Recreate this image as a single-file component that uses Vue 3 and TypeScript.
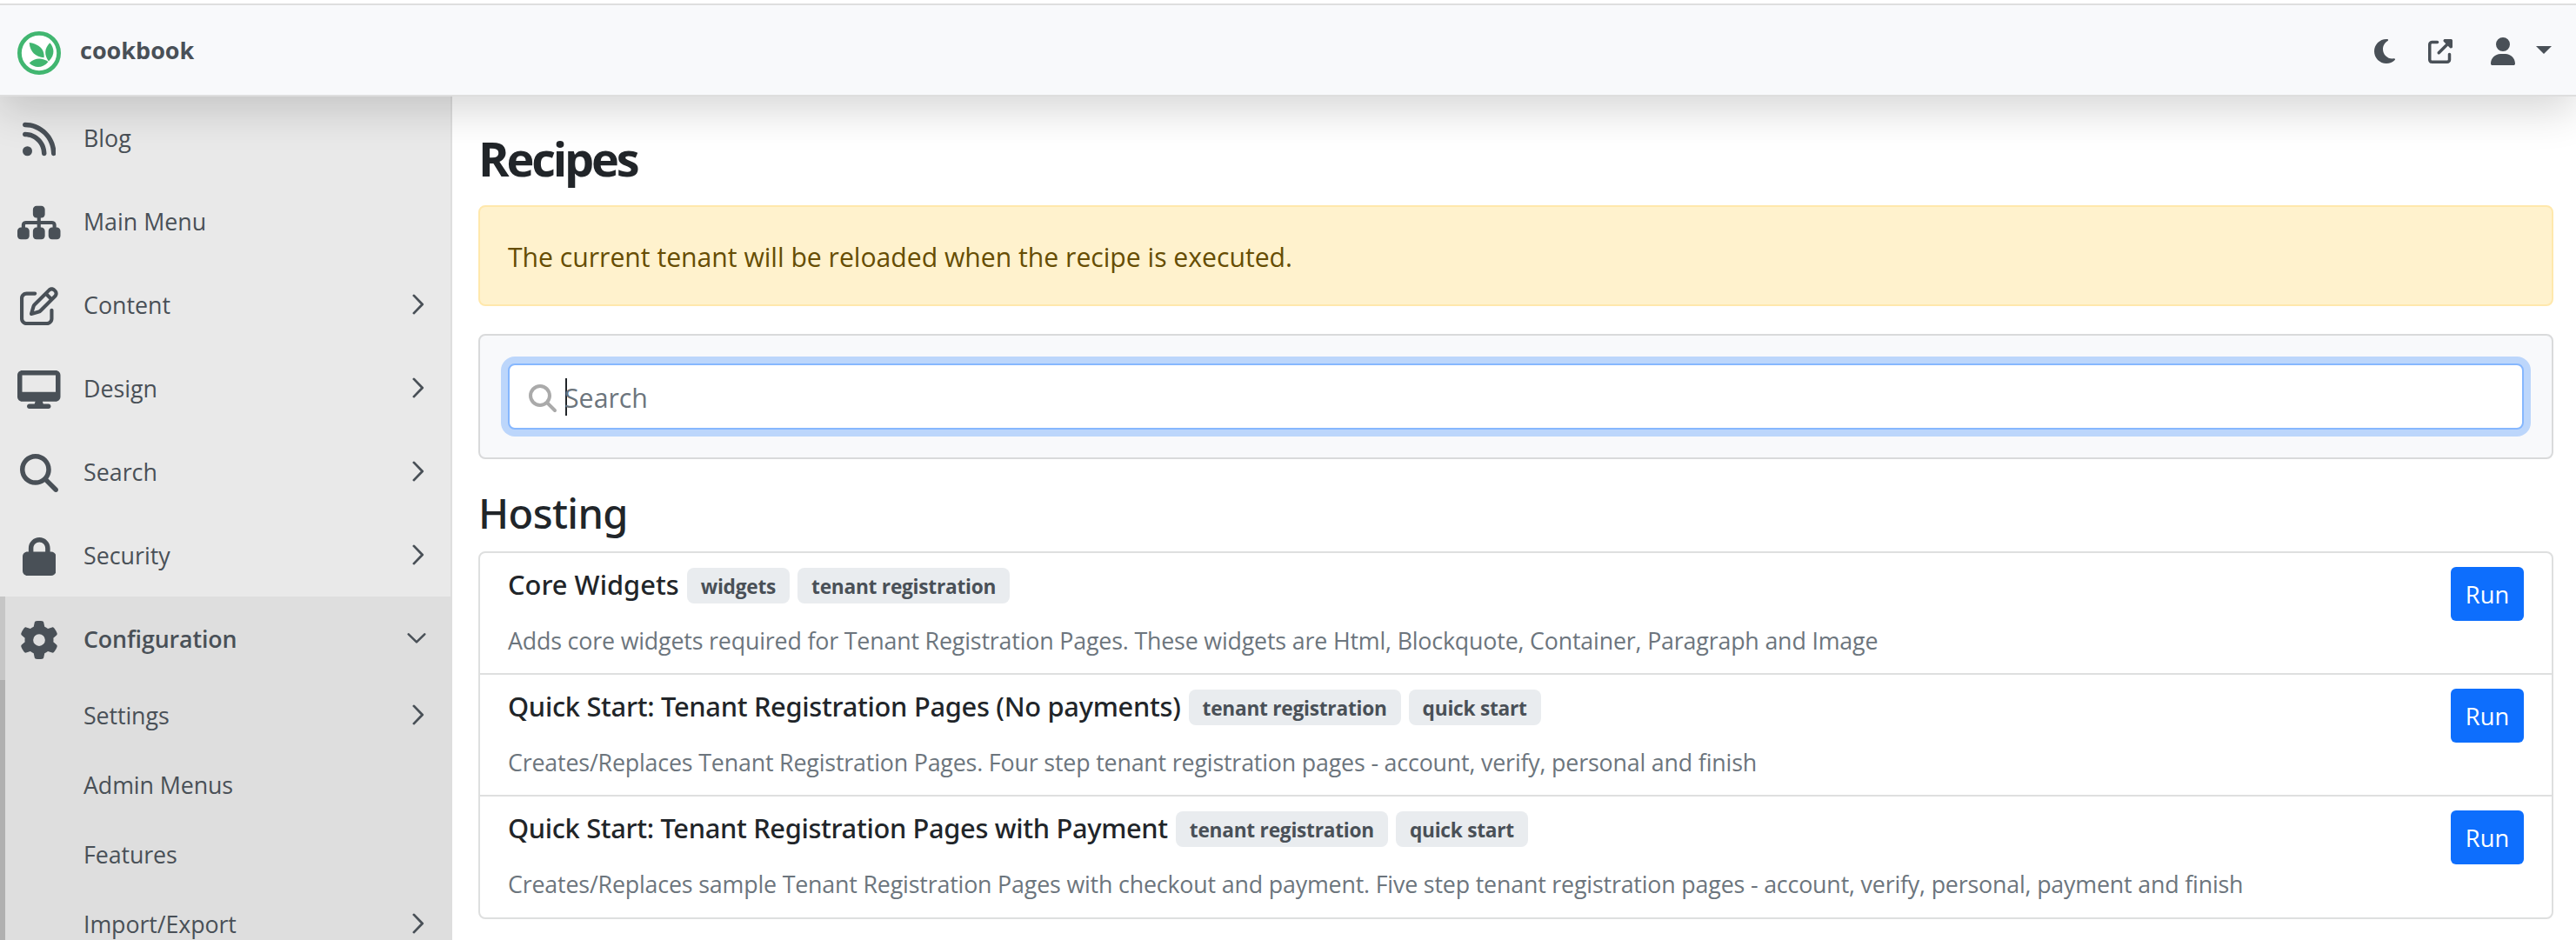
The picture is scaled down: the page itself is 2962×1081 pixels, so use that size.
<script setup lang="ts">
interface MenuIcon { viewBox: string; width: number; path: string }
interface MenuItem { label: string; icon: MenuIcon; arrow: boolean }
interface Recipe { title: string; tags: string[]; description: string }

const icons: Record<string, MenuIcon> = {
  rss: { viewBox: '0 0 448 512', width: 38.5, path: 'M0 64C0 46.3 14.3 32 32 32c229.8 0 416 186.2 416 416c0 17.7-14.3 32-32 32s-32-14.3-32-32C384 253.6 226.4 96 32 96C14.3 96 0 81.7 0 64zM0 416a64 64 0 1 1 128 0A64 64 0 1 1 0 416zM32 160c159.1 0 288 128.9 288 288c0 17.7-14.3 32-32 32s-32-14.3-32-32c0-123.7-100.3-224-224-224c-17.7 0-32-14.3-32-32s14.3-32 32-32z' },
  sitemap: { viewBox: '0 0 576 512', width: 49.5, path: 'M208 80c0-26.5 21.5-48 48-48h64c26.5 0 48 21.5 48 48v64c0 26.5-21.5 48-48 48h-8v40H464c30.9 0 56 25.1 56 56v32h8c26.5 0 48 21.5 48 48v64c0 26.5-21.5 48-48 48H464c-26.5 0-48-21.5-48-48V368c0-26.5 21.5-48 48-48h8V288c0-4.4-3.6-8-8-8H312v40h8c26.5 0 48 21.5 48 48v64c0 26.5-21.5 48-48 48H256c-26.5 0-48-21.5-48-48V368c0-26.5 21.5-48 48-48h8V280H112c-4.4 0-8 3.6-8 8v32h8c26.5 0 48 21.5 48 48v64c0 26.5-21.5 48-48 48H48c-26.5 0-48-21.5-48-48V368c0-26.5 21.5-48 48-48h8V288c0-30.9 25.1-56 56-56H264V192h-8c-26.5 0-48-21.5-48-48V80z' },
  pen: { viewBox: '0 0 512 512', width: 44, path: 'M441 58.9L453.1 71c9.4 9.4 9.4 24.6 0 33.9L424 134.1 377.9 88 407 58.9c9.4-9.4 24.6-9.4 33.9 0zM209.8 256.2L344 121.9 390.1 168 255.8 302.2c-2.9 2.9-6.5 5-10.4 6.1l-58.5 16.7 16.7-58.5c1.1-3.9 3.2-7.5 6.1-10.4zM373.1 25L175.8 222.2c-8.7 8.7-15 19.4-18.3 31.1l-28.6 100c-2.4 8.4-.1 17.4 6.1 23.6s15.2 8.5 23.6 6.1l100-28.6c11.8-3.4 22.5-9.7 31.1-18.3L487 138.9c28.1-28.1 28.1-73.7 0-101.8L474.9 25C446.8-3.1 401.2-3.1 373.1 25zM88 64C39.4 64 0 103.4 0 152V424c0 48.6 39.4 88 88 88H360c48.6 0 88-39.4 88-88V312c0-13.3-10.7-24-24-24s-24 10.7-24 24V424c0 22.1-17.9 40-40 40H88c-22.1 0-40-17.9-40-40V152c0-22.1 17.9-40 40-40H200c13.3 0 24-10.7 24-24s-10.7-24-24-24H88z' },
  desktop: { viewBox: '0 0 576 512', width: 49.5, path: 'M64 0C28.7 0 0 28.7 0 64V352c0 35.3 28.7 64 64 64H240l-10.7 32H160c-17.7 0-32 14.3-32 32s14.3 32 32 32H416c17.7 0 32-14.3 32-32s-14.3-32-32-32H346.7L336 416H512c35.3 0 64-28.7 64-64V64c0-35.3-28.7-64-64-64H64zM512 64V288H64V64H512z' },
  search: { viewBox: '0 0 512 512', width: 44, path: 'M416 208c0 45.9-14.9 88.3-40 122.7L502.6 457.4c12.5 12.5 12.5 32.8 0 45.3s-32.8 12.5-45.3 0L330.7 376c-34.4 25.2-76.8 40-122.7 40C93.1 416 0 322.9 0 208S93.1 0 208 0S416 93.1 416 208zM208 352a144 144 0 1 0 0-288 144 144 0 1 0 0 288z' },
  lock: { viewBox: '0 0 448 512', width: 38.5, path: 'M144 144v48H304V144c0-44.2-35.8-80-80-80s-80 35.8-80 80zM80 192V144C80 64.5 144.5 0 224 0s144 64.5 144 144v48h16c35.3 0 64 28.7 64 64V448c0 35.3-28.7 64-64 64H64c-35.3 0-64-28.7-64-64V256c0-35.3 28.7-64 64-64H80z' },
  gear: { viewBox: '0 0 512 512', width: 44, path: 'M495.9 166.6c3.2 8.7 .5 18.4-6.4 24.6l-43.3 39.4c1.1 8.3 1.7 16.8 1.7 25.4s-.6 17.1-1.7 25.4l43.3 39.4c6.9 6.2 9.6 15.9 6.4 24.6c-4.4 11.9-9.7 23.3-15.8 34.3l-4.7 8.1c-6.6 11-14 21.4-22.1 31.2c-5.9 7.2-15.7 9.6-24.5 6.8l-55.7-17.7c-13.4 10.3-28.2 18.9-44 25.4l-12.5 57.1c-2 9.1-9 16.3-18.2 17.8c-13.8 2.3-28 3.5-42.5 3.5s-28.7-1.2-42.5-3.5c-9.2-1.5-16.2-8.7-18.2-17.8l-12.5-57.1c-15.8-6.5-30.6-15.1-44-25.4L83.1 425.9c-8.8 2.8-18.6 .3-24.5-6.8c-8.1-9.8-15.5-20.2-22.1-31.2l-4.7-8.1c-6.1-11-11.4-22.4-15.8-34.3c-3.2-8.7-.5-18.4 6.4-24.6l43.3-39.4C64.6 273.1 64 264.6 64 256s.6-17.1 1.7-25.4L22.4 191.2c-6.9-6.2-9.6-15.9-6.4-24.6c4.4-11.9 9.7-23.3 15.8-34.3l4.7-8.1c6.6-11 14-21.4 22.1-31.2c5.9-7.2 15.7-9.6 24.5-6.8l55.7 17.7c13.4-10.3 28.2-18.9 44-25.4l12.5-57.1c2-9.1 9-16.3 18.2-17.8C227.3 1.2 241.5 0 256 0s28.7 1.2 42.5 3.5c9.2 1.5 16.2 8.7 18.2 17.8l12.5 57.1c15.8 6.5 30.6 15.1 44 25.4l55.7-17.7c8.8-2.8 18.6-.3 24.5 6.8c8.1 9.8 15.5 20.2 22.1 31.2l4.7 8.1c6.1 11 11.4 22.4 15.8 34.3zM256 336a80 80 0 1 0 0-160 80 80 0 1 0 0 160z' },
}

const menu: MenuItem[] = [
  { label: 'Blog', icon: icons.rss, arrow: false },
  { label: 'Main Menu', icon: icons.sitemap, arrow: false },
  { label: 'Content', icon: icons.pen, arrow: true },
  { label: 'Design', icon: icons.desktop, arrow: true },
  { label: 'Search', icon: icons.search, arrow: true },
  { label: 'Security', icon: icons.lock, arrow: true },
]

const configuration = [
  { label: 'Settings', arrow: true },
  { label: 'Admin Menus', arrow: false },
  { label: 'Features', arrow: false },
  { label: 'Import/Export', arrow: true },
]

const recipes: Recipe[] = [
  {
    title: 'Core Widgets',
    tags: ['widgets', 'tenant registration'],
    description: 'Adds core widgets required for Tenant Registration Pages. These widgets are Html, Blockquote, Container, Paragraph and Image',
  },
  {
    title: 'Quick Start: Tenant Registration Pages (No payments)',
    tags: ['tenant registration', 'quick start'],
    description: 'Creates/Replaces Tenant Registration Pages. Four step tenant registration pages - account, verify, personal and finish',
  },
  {
    title: 'Quick Start: Tenant Registration Pages with Payment',
    tags: ['tenant registration', 'quick start'],
    description: 'Creates/Replaces sample Tenant Registration Pages with checkout and payment. Five step tenant registration pages - account, verify, personal, payment and finish',
  },
]
</script>

<template>
  <div class="page">
    <header class="topbar">
      <a class="brand">
        <svg class="logo" viewBox="0 0 50 50" width="50" height="50">
          <circle cx="25" cy="25" r="22.6" fill="#fff" stroke="#41b670" stroke-width="4.8" />
          <g fill="#41b670">
            <path d="M13.7 12.9C22 14 31.5 18.5 30.6 30.3C21 29 14.5 24 13.7 12.9z" />
            <path d="M37.3 13.3C42 18.5 44 27 36 34.5C30.5 27.5 31 19.5 37.3 13.3z" />
            <path d="M13.7 36.6C20 30 29 30.3 35.5 35C29.5 42.5 20 43 13.7 36.6z" />
          </g>
        </svg>
        <span>cookbook</span>
      </a>
      <nav class="tools">
        <svg class="moon" viewBox="0 0 384 512" width="24" height="32"><path d="M223.5 32C100 32 0 132.3 0 256S100 480 223.5 480c60.6 0 115.5-24.2 155.8-63.4c5-4.9 6.3-12.5 3.1-18.7s-10.1-9.7-17-8.5c-9.8 1.7-19.8 2.6-30.1 2.6c-96.9 0-175.5-78.8-175.5-176c0-65.8 36-123.1 89.3-153.3c6.1-3.5 9.2-10.5 7.7-17.3s-7.3-11.9-14.3-12.5c-6.3-.5-12.6-.8-19-.8z" /></svg>
        <svg class="external" viewBox="0 0 512 512" width="28" height="28"><path d="M352 0c-12.9 0-24.6 7.8-29.6 19.8s-2.2 25.7 6.9 34.9L370.7 96 201.4 265.4c-12.5 12.5-12.5 32.8 0 45.3s32.8 12.5 45.3 0L416 141.3l41.4 41.4c9.2 9.2 22.9 11.9 34.9 6.9s19.8-16.6 19.8-29.6V32c0-17.7-14.3-32-32-32H352zM80 32C35.8 32 0 67.8 0 112V432c0 44.2 35.8 80 80 80H400c44.2 0 80-35.8 80-80V320c0-17.7-14.3-32-32-32s-32 14.3-32 32V432c0 8.8-7.2 16-16 16H80c-8.8 0-16-7.2-16-16V112c0-8.8 7.2-16 16-16H192c17.7 0 32-14.3 32-32s-14.3-32-32-32H80z" /></svg>
        <svg class="user" viewBox="0 0 448 512" width="28" height="32"><path d="M224 256A128 128 0 1 0 224 0a128 128 0 1 0 0 256zm-45.7 48C79.8 304 0 383.8 0 482.3C0 498.7 13.3 512 29.7 512H418.3c16.4 0 29.7-13.3 29.7-29.7C448 383.8 368.2 304 269.7 304H178.3z" /></svg>
        <span class="caret-down"></span>
      </nav>
    </header>

    <div class="body">
      <aside class="sidebar">
        <a v-for="item in menu" :key="item.label" class="row">
          <span class="row-icon"><svg :viewBox="item.icon.viewBox" :width="item.icon.width" height="44"><path :d="item.icon.path" /></svg></span>
          <span class="row-label">{{ item.label }}</span>
          <svg v-if="item.arrow" class="arrow" viewBox="0 0 14 24" width="14" height="24"><path d="M1.9 1.9L11.7 12L1.9 22.1" /></svg>
        </a>
        <section class="expanded">
          <a class="row active">
            <span class="row-icon"><svg :viewBox="icons.gear.viewBox" :width="icons.gear.width" height="44"><path :d="icons.gear.path" /></svg></span>
            <span class="row-label">Configuration</span>
            <svg class="arrow down" viewBox="0 0 24 14" width="22" height="14"><path d="M1.9 1.9L12 11.7L22.1 1.9" /></svg>
          </a>
          <a v-for="item in configuration" :key="item.label" class="row sub">
            <span class="row-label">{{ item.label }}</span>
            <svg v-if="item.arrow" class="arrow" viewBox="0 0 14 24" width="14" height="24"><path d="M1.9 1.9L11.7 12L1.9 22.1" /></svg>
          </a>
        </section>
      </aside>

      <main class="content">
        <h1>Recipes</h1>
        <div class="alert">The current tenant will be reloaded when the recipe is executed.</div>
        <div class="card">
          <div class="search">
            <svg viewBox="0 0 512 512" width="32" height="32"><path :d="icons.search.path" /></svg>
            <span class="cursor"></span>
            <input type="text" placeholder="Search" />
          </div>
        </div>
        <h2>Hosting</h2>
        <ul class="list">
          <li v-for="recipe in recipes" :key="recipe.title">
            <div class="info">
              <div class="title">
                <h5>{{ recipe.title }}</h5>
                <span v-for="tag in recipe.tags" :key="tag" class="badge">{{ tag }}</span>
              </div>
              <p>{{ recipe.description }}</p>
            </div>
            <button type="button">Run</button>
          </li>
        </ul>
      </main>
    </div>
  </div>
</template>

<style>
body {
  margin: 0;
  background: #fff;
  overflow: hidden;
}
</style>

<style scoped>
* {
  box-sizing: border-box;
}
.page {
  display: flex;
  flex-direction: column;
  height: 1081px;
  padding-top: 4px;
  overflow: hidden;
  font-family: "Open Sans", "Noto Sans", sans-serif;
  color: #212529;
}
svg {
  display: block;
  flex: none;
  fill: #495057;
}
.topbar {
  position: relative;
  z-index: 2;
  flex: none;
  display: flex;
  justify-content: space-between;
  align-items: center;
  height: 107px;
  padding: 0 28px 0 20px;
  background: #f8f9fb;
  border-top: 2px solid #dedede;
  border-bottom: 2px solid #dedede;
  box-shadow: 0 16px 48px rgba(0, 0, 0, 0.16);
  clip-path: inset(0 0 -120px 0);
}
.brand {
  display: flex;
  align-items: center;
  gap: 22px;
  font-size: 27px;
  font-weight: 700;
  line-height: 38px;
  color: #495057;
}
.logo {
  margin-top: 7px;
}
.tools {
  display: flex;
  align-items: center;
}
.tools svg {
  margin-top: 3px;
}
.external {
  margin-left: 38px;
}
.user {
  margin-left: 44px;
}
.caret-down {
  margin-left: 24px;
  border: 9.5px solid transparent;
  border-top-color: #495057;
  border-bottom: 0;
}
.body {
  flex: 1;
  display: flex;
  min-height: 0;
  margin-top: -1px;
}
.sidebar {
  flex: none;
  width: 520px;
  background: #e9e9e9;
  border-right: 2px solid #dedede;
  overflow: hidden;
}
.row {
  display: flex;
  align-items: center;
  height: 96px;
  padding: 0 30px 0 20px;
  font-size: 26.8px;
  line-height: 38px;
  color: #495057;
}
.row-icon {
  display: flex;
  justify-content: center;
  width: 50px;
  margin: 4px 26px 0 0;
}
.row-label {
  flex: 1;
  padding-top: 2px;
}
.arrow {
  fill: none;
  stroke: #495057;
  stroke-width: 2.8;
  stroke-linecap: round;
  stroke-linejoin: round;
}
.arrow.down {
  margin-right: -2px;
}
.expanded {
  background: #dedede;
}
.row.active {
  padding-left: 14px;
  border-left: 6px solid #c6c6c6;
  font-weight: 600;
  letter-spacing: -0.12px;
}
.row.sub {
  height: 80px;
  padding-left: 90px;
  border-left: 6px solid #b0b0b0;
  letter-spacing: -0.1px;
}
.content {
  flex: 1;
  min-width: 0;
  padding: 40px 26px 0 30px;
}
h1,
h2,
h5,
p,
ul {
  margin: 0;
}
h1 {
  font-size: 54px;
  font-weight: 700;
  line-height: 64px;
  letter-spacing: -3.2px;
}
.alert {
  display: flex;
  align-items: center;
  height: 116px;
  margin-top: 22px;
  padding: 3px 32px 0;
  border: 2px solid #ffe8ac;
  border-radius: 8px;
  background: #fff2cd;
  font-size: 30.2px;
  letter-spacing: -0.02px;
  color: #664d03;
}
.card {
  height: 144px;
  margin-top: 32px;
  padding: 32px;
  border: 2px solid #d9dadb;
  border-radius: 8px;
  background: #f8f9fb;
}
.search {
  display: flex;
  align-items: center;
  height: 76px;
  padding-left: 22px;
  border: 2px solid #86b7fe;
  border-radius: 8px;
  background: #fff;
  box-shadow: 0 0 0 8px #bcd6fb;
}
.search svg {
  margin-top: 4px;
  fill: #aaa;
}
.cursor {
  width: 2px;
  height: 43px;
  margin-left: 10px;
  background: #212529;
}
.search input {
  flex: 1;
  height: 60px;
  margin-left: -3px;
  padding: 3px 0 0;
  border: 0;
  outline: 0;
  background: transparent;
  font-family: inherit;
  font-size: 30.3px;
  color: #212529;
}
.search input::placeholder {
  color: #6c757d;
  opacity: 1;
}
h2 {
  margin-top: 34px;
  font-family: "Noto Sans", sans-serif;
  font-size: 47px;
  font-weight: 500;
  line-height: 56px;
  letter-spacing: -0.6px;
}
.list {
  margin-top: 16px;
  padding: 0;
  list-style: none;
  border: 2px solid #dedfdf;
  border-radius: 8px;
}
.list li {
  display: flex;
  justify-content: space-between;
  align-items: flex-start;
  height: 140px;
  padding: 15px 32px 0;
  border-bottom: 2px solid #dedfdf;
}
.list li:last-child {
  height: 139px;
  border-bottom: 0;
}
.title {
  display: flex;
  align-items: center;
  gap: 9px;
  height: 42px;
}
h5 {
  font-family: "Noto Sans", sans-serif;
  font-size: 30.8px;
  font-weight: 500;
  line-height: 42px;
  letter-spacing: -0.28px;
}
.list li:first-child h5 {
  letter-spacing: 0.03px;
}
.list li:last-child h5 {
  letter-spacing: -0.32px;
}
.badge {
  height: 41px;
  margin-top: 3px;
  padding: 3px 16px 0;
  border-radius: 8px;
  background: #e9ecef;
  font-size: 22.7px;
  font-weight: 700;
  line-height: 38px;
  letter-spacing: -0.25px;
  color: #495057;
}
.info p {
  margin-top: 25px;
  font-size: 26.8px;
  line-height: 38px;
  letter-spacing: -0.175px;
  color: #6c757d;
}
button {
  width: 84px;
  height: 62px;
  margin-top: 1px;
  padding: 0;
  border: 0;
  border-radius: 6px;
  background: #0d6efd;
  font-family: inherit;
  font-size: 27.3px;
  color: #fff;
}
</style>
